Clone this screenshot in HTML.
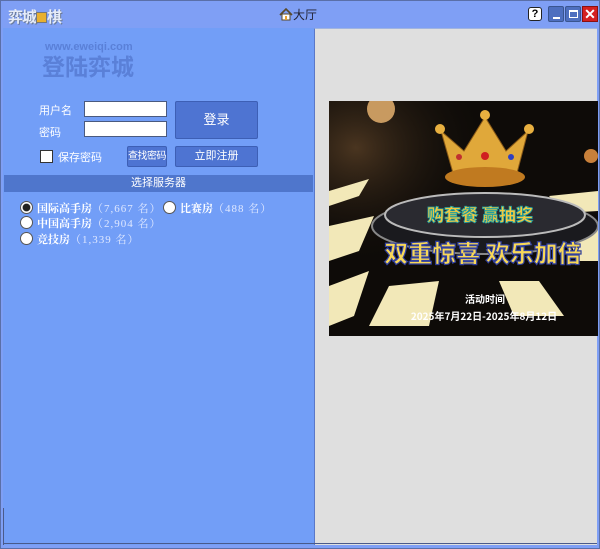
<!DOCTYPE html>
<html><head><meta charset="utf-8"><style>
*{margin:0;padding:0;box-sizing:border-box}
body{width:600px;height:549px;background:#7f9ff5;position:relative;overflow:hidden;font-family:"Liberation Sans","Noto Sans CJK SC",sans-serif;font-size:12px}
.a{position:absolute;white-space:nowrap}
.frame{left:0;top:0;width:600px;height:549px;border:1px solid #5a6fa8}
.left{left:3px;top:28px;width:311px;height:517px;background:#729ef7}
.right{left:314px;top:28px;width:283px;height:517px;background:#dfdfdf;border-left:1px solid #5a78c8;border-top:1px solid #a0b4e0}
.inp{background:#fff;border:1px solid #4a5a80;width:83px;height:16px}
.btn{background:#4e74d2;border:1px solid #3d5fb5;color:#fff;text-align:center;border-radius:2px}
.lbl{color:#fff;font-size:11px}
.rad{width:13px;height:13px;border-radius:50%;background:#fff;border:1px solid #555}
.rt{font-family:"Liberation Serif","Noto Serif CJK SC",serif;font-weight:bold;color:#fff;font-size:11px}
.rt span{font-weight:normal;color:#dfe8ff;letter-spacing:1px}
</style></head><body>
<div class="a frame"></div>
<div class="a" style="left:8px;top:6px;color:#e6ecf8;font-size:15px;font-weight:bold;text-shadow:1px 1px 0 #6a7a9a;letter-spacing:-1px">弈城<span style="display:inline-block;width:11px;height:11px;background:#e8b030;border:1px solid #777;vertical-align:-1px"></span>棋</div>
<div class="a" style="left:279px;top:6px;font-size:12px;color:#223">
<svg width="14" height="13" viewBox="0 0 14 13" style="vertical-align:-2px"><path d="M1 7L7 1L13 7" fill="none" stroke="#5a4a2a" stroke-width="1.6"/><rect x="3" y="6" width="8" height="6" fill="#fff" stroke="#5a4a2a"/><rect x="6" y="8" width="2" height="4" fill="#e8a030"/></svg>大厅</div>
<div class="a" style="left:528px;top:7px;width:14px;height:14px;background:#fff;border:1px solid #222;border-radius:3px;font-size:11px;font-weight:bold;text-align:center;line-height:12px">?</div>
<div class="a" style="left:548px;top:6px;width:16px;height:16px;background:#4e6fbf;border:1px solid #3a558f;border-radius:2px"><div class="a" style="left:4px;top:10px;width:7px;height:2px;background:#fff"></div></div>
<div class="a" style="left:565px;top:6px;width:16px;height:16px;background:#4e6fbf;border:1px solid #3a558f;border-radius:2px"><div class="a" style="left:3px;top:3px;width:9px;height:8px;border:1px solid #fff;border-top-width:2px"></div></div>
<div class="a" style="left:582px;top:6px;width:16px;height:16px;background:#d42020;border:1px solid #8a1010;color:#fff;font-weight:bold;font-size:14px;line-height:14px;text-align:center">✕</div>

<div class="a left"></div>
<div class="a right"></div>
<div class="a" style="left:3px;top:508px;width:1px;height:37px;background:#4a5a8a"></div>
<div class="a" style="left:4px;top:543px;width:593px;height:1px;background:#4a5a8a"></div>

<div class="a" style="left:45px;top:41px;color:#5a80d8;font-size:11px;font-weight:bold">www.eweiqi.com</div>
<div class="a" style="left:42px;top:48px;color:#5a80d8;font-size:23px;font-weight:bold">登陆弈城</div>

<div class="a lbl" style="left:39px;top:102px">用户名</div>
<div class="a lbl" style="left:39px;top:124px">密码</div>
<div class="a inp" style="left:84px;top:101px"></div>
<div class="a inp" style="left:84px;top:121px"></div>
<div class="a btn" style="left:175px;top:101px;width:83px;height:38px;line-height:36px;font-size:13px">登录</div>
<div class="a" style="left:40px;top:150px;width:13px;height:13px;background:#fff;border:1px solid #333"></div>
<div class="a lbl" style="left:58px;top:149px">保存密码</div>
<div class="a btn" style="left:127px;top:146px;width:40px;height:21px;line-height:19px;font-size:10px;letter-spacing:-0.5px">查找密码</div>
<div class="a btn" style="left:175px;top:146px;width:83px;height:21px;line-height:19px;font-size:11px">立即注册</div>
<div class="a" style="left:4px;top:175px;width:309px;height:17px;background:#4f76cc;color:#fff;text-align:center;font-size:11px;line-height:17px">选择服务器</div>

<div class="a rad" style="left:20px;top:201px;background:radial-gradient(circle,#222 45%,#fff 55%)"></div>
<div class="a rt" style="left:37px;top:200px">国际高手房<span>（7,667 名）</span></div>
<div class="a rad" style="left:163px;top:201px"></div>
<div class="a rt" style="left:180px;top:200px">比赛房<span>（488 名）</span></div>
<div class="a rad" style="left:20px;top:216px"></div>
<div class="a rt" style="left:37px;top:215px">中国高手房<span>（2,904 名）</span></div>
<div class="a rad" style="left:20px;top:232px"></div>
<div class="a rt" style="left:37px;top:231px">竞技房<span>（1,339 名）</span></div>

<svg class="a" style="left:329px;top:101px" width="269" height="235" viewBox="0 0 269 235">
<rect width="269" height="235" fill="#0e0b08"/>
<radialGradient id="g" cx="0.1" cy="0.2" r="0.5"><stop offset="0" stop-color="#4a3520"/><stop offset="1" stop-color="#0e0b08" stop-opacity="0"/></radialGradient>
<rect width="269" height="235" fill="url(#g)"/>
<circle cx="52" cy="8" r="14" fill="#c89a60"/>
<circle cx="262" cy="55" r="7" fill="#c8803a"/>
<g fill="#f2e8b8">
<polygon points="0,90 40,78 30,95 0,105"/>
<polygon points="0,125 45,115 30,150 0,160"/>
<polygon points="0,185 40,170 25,215 0,225"/>
<polygon points="60,185 110,180 100,225 40,225"/>
<polygon points="170,180 210,180 235,215 185,215"/>
<polygon points="220,95 269,90 269,110 235,112"/>
<polygon points="235,130 269,128 269,160 250,160"/>
</g>
<ellipse cx="156" cy="125" rx="113" ry="28" fill="#1a1a1e" stroke="#888" stroke-width="2"/>
<ellipse cx="156" cy="114" rx="100" ry="22" fill="#2a2a30" stroke="#bbb" stroke-width="2"/>
<path d="M124 72 L112 30 L135 50 L156 16 L177 50 L199 30 L188 72 Z" fill="#e0a83a" stroke="#8a5a18"/>
<ellipse cx="156" cy="76" rx="40" ry="10" fill="#c07a20"/>
<circle cx="156" cy="14" r="5" fill="#e8b040"/><circle cx="111" cy="28" r="5" fill="#e8b040"/><circle cx="200" cy="28" r="5" fill="#e8b040"/>
<circle cx="156" cy="55" r="4" fill="#d02020"/><circle cx="130" cy="56" r="3" fill="#c03030"/><circle cx="182" cy="56" r="3" fill="#3040c0"/>
<text x="151" y="120" text-anchor="middle" font-family="Noto Sans CJK SC,sans-serif" font-weight="900" font-size="17" fill="#f5c840" stroke="#20a0a0" stroke-width="0.8">购套餐 赢抽奖</text>
<text x="154" y="161" text-anchor="middle" font-family="Noto Sans CJK SC,sans-serif" font-weight="900" font-size="24" fill="#f8d858" stroke="#3040a0" stroke-width="1.2">双重惊喜 欢乐加倍</text>
<text x="156" y="202" text-anchor="middle" font-family="Noto Sans CJK SC,sans-serif" font-weight="bold" font-size="10" fill="#fff">活动时间</text>
<text x="155" y="219" text-anchor="middle" font-family="Noto Sans CJK SC,sans-serif" font-weight="bold" font-size="10" fill="#fff">2025年7月22日-2025年8月12日</text>
</svg>
</body></html>
